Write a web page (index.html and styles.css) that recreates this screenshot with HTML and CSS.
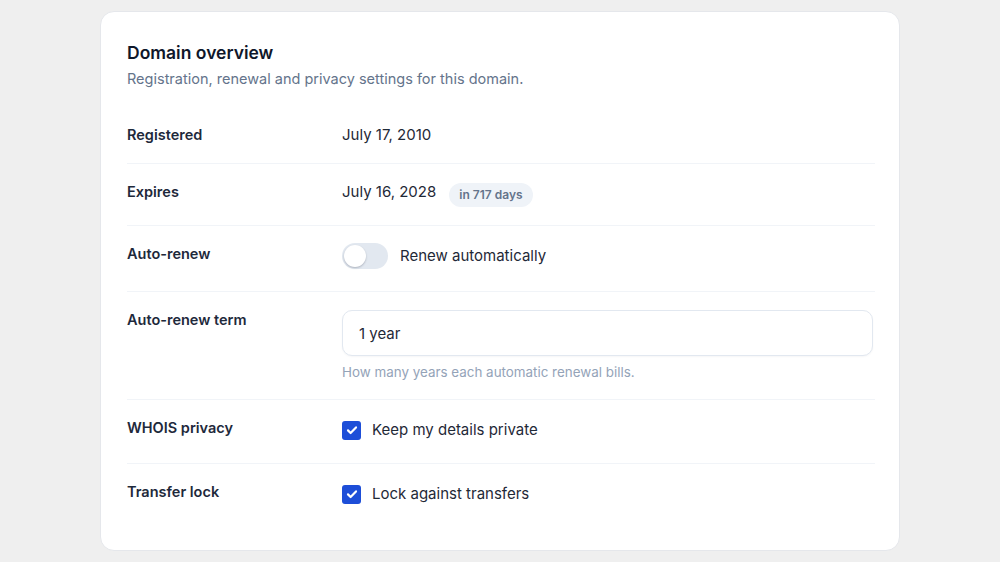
FILE: index.html
```html
<!DOCTYPE html>
<html lang="en">
<head>
  <meta charset="UTF-8">
  <title>Domain overview</title>
  <meta name="viewport" content="width=device-width, initial-scale=1.0">
  <link rel="stylesheet" href="styles.css">
</head>
<body>

  <section class="card">
    <div class="card-head">
      <h2 class="card-title">Domain overview</h2>
      <p class="card-sub">Registration, renewal and privacy settings for this domain.</p>
    </div>

    <div class="row">
      <div class="label">Registered</div>
      <div class="value">July 17, 2010</div>
    </div>

    <div class="row">
      <div class="label">Expires</div>
      <div class="value">July 16, 2028 <span class="badge">in 717 days</span></div>
    </div>

    <div class="row">
      <div class="label">Auto-renew</div>
      <label class="value switch">
        <span class="toggle"><span class="knob"></span></span>
        Renew automatically
      </label>
    </div>

    <div class="row">
      <div class="label">Auto-renew term</div>
      <div class="field">
        <input type="text" class="input" value="1 year" readonly>
        <div class="help">How many years each automatic renewal bills.</div>
      </div>
    </div>

    <div class="row">
      <div class="label">WHOIS privacy</div>
      <label class="value check">
        <span class="box">
          <svg width="14" height="14" viewBox="0 0 14 14"><path d="M3 7.4l2.6 2.6L11 4.4" fill="none" stroke="#fff" stroke-width="2.2" stroke-linecap="round" stroke-linejoin="round"/></svg>
        </span>
        Keep my details private
      </label>
    </div>

    <div class="row last">
      <div class="label">Transfer lock</div>
      <label class="value check">
        <span class="box">
          <svg width="14" height="14" viewBox="0 0 14 14"><path d="M3 7.4l2.6 2.6L11 4.4" fill="none" stroke="#fff" stroke-width="2.2" stroke-linecap="round" stroke-linejoin="round"/></svg>
        </span>
        Lock against transfers
      </label>
    </div>
  </section>

</body>
</html>
```

FILE: styles.css
```css
body {
	margin: 0;
	padding: 11px 0;
	background-color: #efefef;
	font-family: Inter, "Noto Sans", sans-serif;
	color: #1f2937;
}

.card {
	width: 748px;
	margin: 0 auto;
	padding: 30px 24px 23px 26px;
	background: white;
	border: 1px solid #e5e7eb;
	border-radius: 14px;
}

.card-head {
	margin-bottom: 18px;
}

.card-title {
	margin: 0;
	font-size: 17.5px;
	font-weight: 600;
	line-height: 22px;
	color: #0f172a;
}

.card-sub {
	margin: 5px 0 0;
	font-size: 14.5px;
	line-height: 20px;
	color: #64748b;
}

/* label column on the left, control on the right, both top aligned */
.row {
	display: flex;
	align-items: flex-start;
	padding: 18px 0;
	border-bottom: 1px solid #f1f4f8;
}

.row.last {
	border-bottom: none;
}

.label {
	width: 215px;
	flex-shrink: 0;
	font-size: 14.5px;
	font-weight: 600;
	line-height: 20px;
	color: #1e293b;
}

.value {
	display: flex;
	align-items: flex-start;
	gap: 13px;
	font-size: 15px;
	line-height: 20px;
	color: #1f2937;
}

.badge {
	margin-top: 1px;
	padding: 0 10px;
	font-size: 12px;
	font-weight: 600;
	line-height: 24px;
	color: #64748b;
	background: #eff3f8;
	border-radius: 999px;
}

.switch {
	align-items: center;
	gap: 12px;
	height: 26px;
	margin-top: -1px;
	padding-bottom: 4px;
}

.toggle {
	position: relative;
	width: 46px;
	height: 26px;
	border-radius: 13px;
	background: #e2e8f0;
}

.knob {
	position: absolute;
	left: 2px;
	top: 2px;
	width: 22px;
	height: 22px;
	border-radius: 50%;
	background: white;
	box-shadow: 0 1px 2px rgba(15, 23, 42, 0.25);
}

.field {
	flex: 1;
	padding-right: 2px;
}

.input {
	display: block;
	box-sizing: border-box;
	width: 100%;
	height: 46px;
	padding: 0 16px;
	font-family: inherit;
	font-size: 15px;
	color: #1f2937;
	border: 1px solid #e2e8f0;
	border-radius: 10px;
	box-shadow: 0 1px 2px rgba(15, 23, 42, 0.04);
	outline: none;
}

.help {
	margin-top: 7px;
	font-size: 13.4px;
	line-height: 18px;
	color: #94a3b8;
}

.check {
	align-items: center;
	gap: 11px;
	height: 24px;
	padding-bottom: 3px;
}

.box {
	display: flex;
	align-items: center;
	justify-content: center;
	width: 19px;
	height: 19px;
	border-radius: 3px;
	background: #1d4ed8;
}
```
